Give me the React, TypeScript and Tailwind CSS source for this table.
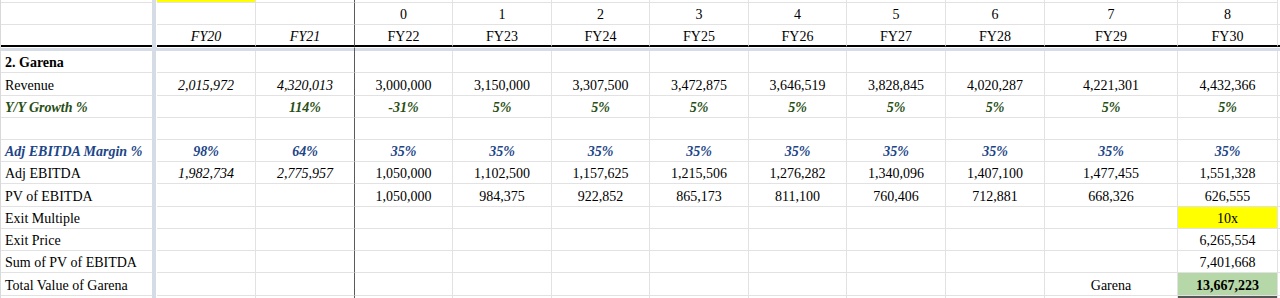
import React from "react";

const W = [99, 99, 98, 99, 98, 99, 98, 99, 99, 133, 100]; // columns B..L
const G = "border-[#e2e2e2]";

type CellSpec = { t?: string; c?: string; bg?: string };

function Row({
  h,
  a,
  aClass = "",
  cells,
  rowText = "",
  thick = false,
}: {
  h: string;
  a?: string;
  aClass?: string;
  cells: (CellSpec | string | null)[];
  rowText?: string;
  thick?: boolean;
}) {
  const bb = thick ? "border-b-2 border-b-black" : "border-b border-b-[#e2e2e2]";
  return (
    <div className={`flex ${h}`}>
      <div className="w-[1px] shrink-0 bg-[#d9d9d9]" />
      <div
        className={`w-[151px] shrink-0 flex items-center pl-[4px] pt-[3px] whitespace-nowrap overflow-hidden ${bb} ${aClass}`}
      >
        {a}
      </div>
      <div className="w-[4px] shrink-0 bg-[#d6dce5]" />
      <div className="w-[1px] shrink-0 bg-white" />
      {W.map((w, i) => {
        const raw = cells[i];
        const spec: CellSpec = typeof raw === "string" ? { t: raw } : raw || {};
        const br = i === 1 ? "border-r border-r-[#5a5a5a]" : "border-r border-r-[#e2e2e2]";
        return (
          <div
            key={i}
            style={{ width: w }}
            className={`shrink-0 flex items-center justify-center pt-[3px] whitespace-nowrap ${br} ${bb} ${spec.bg || ""} ${rowText} ${spec.c || ""}`}
          >
            {spec.t}
          </div>
        );
      })}
      <div className={`w-[2px] shrink-0 ${bb}`} />
    </div>
  );
}

export default function App() {
  const font = { fontFamily: '"Liberation Serif", "Times New Roman", serif' };
  const green = "text-[#274e13] font-bold italic";
  const blue = "text-[#1c4587] font-bold italic";
  return (
    <div className="w-[1280px] h-[298px] bg-white text-black text-[14px] leading-[16px] overflow-hidden" style={font}>
      {/* partial top row */}
      <div className="flex h-[3px]">
        <div className="w-[1px] shrink-0 bg-[#d9d9d9]" />
        <div className="w-[151px] shrink-0 border-b border-b-[#e2e2e2]" />
        <div className="w-[4px] shrink-0 bg-[#d6dce5]" />
        <div className="w-[1px] shrink-0 bg-white" />
        {W.map((w, i) => (
          <div
            key={i}
            style={{ width: w }}
            className={`shrink-0 border-b border-b-[#e2e2e2] ${i === 1 ? "border-r border-r-[#5a5a5a]" : "border-r border-r-[#e2e2e2]"} ${i === 0 ? "bg-[#ffff00]" : ""}`}
          />
        ))}
        <div className="w-[2px] shrink-0" />
      </div>
      <Row h="h-[22px]" cells={[null, null, "0", "1", "2", "3", "4", "5", "6", "7", "8"]} />
      <Row
        h="h-[22px]"
        thick
        cells={[
          { t: "FY20", c: "italic" },
          { t: "FY21", c: "italic" },
          "FY22",
          "FY23",
          "FY24",
          "FY25",
          "FY26",
          "FY27",
          "FY28",
          "FY29",
          "FY30",
        ]}
      />
      {/* frozen row divider */}
      <div className="flex h-[4px]">
        <div className="w-[1px] shrink-0 bg-[#d9d9d9]" />
        <div className="w-[151px] shrink-0 border-t border-t-white bg-[#d6dce5]" />
        <div className="w-[4px] shrink-0 bg-[#d6dce5]" />
        <div className="w-[1px] shrink-0 bg-[#d6dce5]" />
        {W.map((w, i) => (
          <div
            key={i}
            style={{ width: w }}
            className={`shrink-0 border-t border-t-white bg-[#d6dce5] ${i === 1 ? "border-r border-r-[#5a5a5a]" : "border-r border-r-[#d6dce5]"}`}
          />
        ))}
        <div className="w-[2px] shrink-0 border-t border-t-white bg-[#d6dce5]" />
      </div>
      <Row h="h-[22px]" a="2. Garena" aClass="font-bold" cells={[]} />
      <Row
        h="h-[23px]"
        a="Revenue"
        cells={[
          { t: "2,015,972", c: "italic" },
          { t: "4,320,013", c: "italic" },
          "3,000,000",
          "3,150,000",
          "3,307,500",
          "3,472,875",
          "3,646,519",
          "3,828,845",
          "4,020,287",
          "4,221,301",
          "4,432,366",
        ]}
      />
      <Row
        h="h-[22px]"
        a="Y/Y Growth %"
        aClass={green}
        rowText={green}
        cells={[null, "114%", "-31%", "5%", "5%", "5%", "5%", "5%", "5%", "5%", "5%"]}
      />
      <Row h="h-[22px]" cells={[]} />
      <Row
        h="h-[22px]"
        a="Adj EBITDA Margin %"
        aClass={blue}
        rowText={blue}
        cells={["98%", "64%", "35%", "35%", "35%", "35%", "35%", "35%", "35%", "35%", "35%"]}
      />
      <Row
        h="h-[22px]"
        a="Adj EBITDA"
        cells={[
          { t: "1,982,734", c: "italic" },
          { t: "2,775,957", c: "italic" },
          "1,050,000",
          "1,102,500",
          "1,157,625",
          "1,215,506",
          "1,276,282",
          "1,340,096",
          "1,407,100",
          "1,477,455",
          "1,551,328",
        ]}
      />
      <Row
        h="h-[23px]"
        a="PV of EBITDA"
        cells={[
          null,
          null,
          "1,050,000",
          "984,375",
          "922,852",
          "865,173",
          "811,100",
          "760,406",
          "712,881",
          "668,326",
          "626,555",
        ]}
      />
      <Row
        h="h-[22px]"
        a="Exit Multiple"
        cells={[null, null, null, null, null, null, null, null, null, null, { t: "10x", bg: "bg-[#ffff00]" }]}
      />
      <Row
        h="h-[22px]"
        a="Exit Price"
        cells={[null, null, null, null, null, null, null, null, null, null, "6,265,554"]}
      />
      <Row
        h="h-[22px]"
        a="Sum of PV of EBITDA"
        cells={[null, null, null, null, null, null, null, null, null, null, "7,401,668"]}
      />
      <Row
        h="h-[23px]"
        a="Total Value of Garena"
        cells={[
          null,
          null,
          null,
          null,
          null,
          null,
          null,
          null,
          null,
          "Garena",
          { t: "13,667,223", c: "font-bold", bg: "bg-[#b6d7a8]" },
        ]}
      />
      {/* bottom sliver */}
      <div className="flex h-[2px]">
        <div className="w-[1px] shrink-0 bg-[#d9d9d9]" />
        <div className="w-[151px] shrink-0" />
        <div className="w-[4px] shrink-0 bg-[#d6dce5]" />
        <div className="w-[1px] shrink-0 bg-white" />
        {W.map((w, i) => (
          <div
            key={i}
            style={{ width: w }}
            className={`shrink-0 ${i === 1 ? "border-r border-r-[#5a5a5a]" : "border-r border-r-[#e2e2e2]"} ${i === 10 ? "bg-[#555555]" : ""}`}
          />
        ))}
        <div className="w-[2px] shrink-0" />
      </div>
    </div>
  );
}
